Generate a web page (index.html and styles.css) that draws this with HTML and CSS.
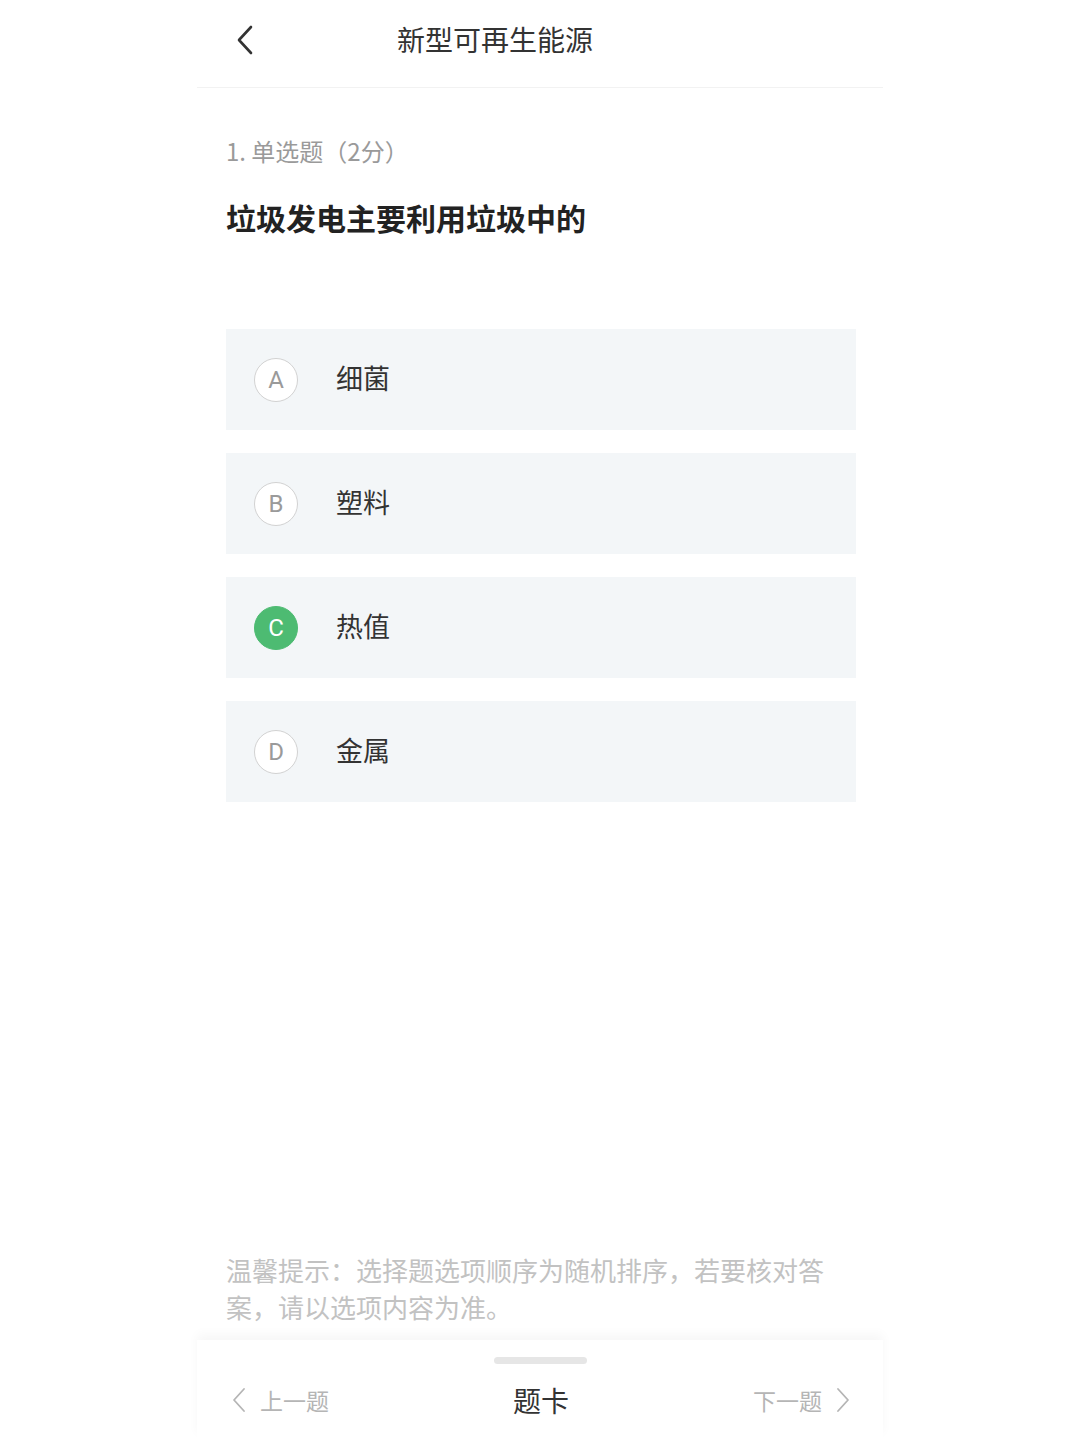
FILE: index.html
```html
<!DOCTYPE html>
<html lang="zh-CN">
<head>
<meta charset="utf-8">
<title>新型可再生能源</title>
<link rel="stylesheet" href="styles.css">
</head>
<body>
<div class="app">
  <header class="topbar">
    <span class="back">
      <svg width="18" height="30" viewBox="0 0 18 30"><path d="M15 2 L3 15 L15 28" fill="none" stroke="#333" stroke-width="2.6" stroke-linecap="round" stroke-linejoin="round"/></svg>
    </span>
    <h1 class="title">新型可再生能源</h1>
  </header>

  <main class="content">
    <div class="qlabel">1. 单选题（2分）</div>
    <div class="qtext">垃圾发电主要利用垃圾中的</div>

    <ul class="options">
      <li class="option"><span class="mark">A</span><span class="otext">细菌</span></li>
      <li class="option"><span class="mark">B</span><span class="otext">塑料</span></li>
      <li class="option"><span class="mark selected">C</span><span class="otext">热值</span></li>
      <li class="option"><span class="mark">D</span><span class="otext">金属</span></li>
    </ul>

    <div class="spacer"></div>

    <p class="hint">温馨提示：选择题选项顺序为随机排序，若要核对答案，请以选项内容为准。</p>
  </main>

  <footer class="bottombar">
    <div class="handle"></div>
    <nav class="nav">
      <span class="nav-side prev">
        <svg width="14" height="26" viewBox="0 0 14 26"><path d="M12 2 L2 13 L12 24" fill="none" stroke="#b5b5b5" stroke-width="1.8" stroke-linecap="round" stroke-linejoin="round"/></svg>
        <span>上一题</span>
      </span>
      <span class="nav-center">题卡</span>
      <span class="nav-side next">
        <span>下一题</span>
        <svg width="14" height="26" viewBox="0 0 14 26"><path d="M2 2 L12 13 L2 24" fill="none" stroke="#b5b5b5" stroke-width="1.8" stroke-linecap="round" stroke-linejoin="round"/></svg>
      </span>
    </nav>
  </footer>
</div>
</body>
</html>
```

FILE: styles.css
```css
* { box-sizing: border-box; }
html, body {
  margin: 0;
  padding: 0;
  background: #ffffff;
}
body {
  font-family: "Noto Sans CJK SC", "Noto Sans", Roboto, sans-serif;
  color: #333;
}
.app {
  width: 686px;
  height: 1439px;
  margin: 0 auto;
  display: flex;
  flex-direction: column;
  background: #fff;
}
.topbar {
  height: 88px;
  flex: none;
  display: flex;
  align-items: center;
  padding-left: 39px;
  border-bottom: 1px solid #f2f2f2;
}
.back {
  display: flex;
  width: 18px;
  height: 30px;
  margin-top: -8px;
}
.title {
  margin: -10px 0 0 143px;
  font-size: 28px;
  font-weight: 400;
  color: #333;
  line-height: 40px;
}
.content {
  flex: 1;
  display: flex;
  flex-direction: column;
  padding: 0 27px 0 29px;
}
.qlabel {
  margin-top: 46px;
  font-size: 24px;
  line-height: 34px;
  color: #9a9a9a;
}
.qtext {
  margin-top: 29px;
  font-size: 30px;
  line-height: 40px;
  font-weight: 700;
  color: #222;
}
.options {
  list-style: none;
  margin: 92px 0 0 0;
  padding: 0;
  display: flex;
  flex-direction: column;
  gap: 23px;
}
.option {
  height: 101px;
  background: #f3f6f8;
  display: flex;
  align-items: center;
  padding-left: 28px;
}
.mark {
  width: 44px;
  height: 44px;
  border-radius: 50%;
  border: 1.5px solid #d2d2d2;
  background: #fff;
  display: flex;
  align-items: center;
  justify-content: center;
  font-family: Roboto, "Noto Sans", sans-serif;
  font-size: 24px;
  color: #9a9a9a;
  flex: none;
}
.mark.selected {
  background: #4dbb72;
  border-color: #4dbb72;
  color: #fff;
}
.otext {
  margin-left: 38px;
  font-size: 27px;
  line-height: 36px;
  margin-top: -3px;
  color: #333;
}
.spacer { flex: 1; }
.hint {
  margin: 0 0 15px 0;
  width: 610px;
  font-size: 26px;
  line-height: 37px;
  color: #c2c2c2;
}
.bottombar {
  flex: none;
  height: 99px;
  box-shadow: 0 -6px 10px rgba(0,0,0,0.035);
  display: flex;
  flex-direction: column;
  align-items: center;
  background: #fff;
}
.handle {
  margin-top: 17px;
  width: 93px;
  height: 7px;
  border-radius: 4px;
  background: #e6e6e6;
}
.nav {
  width: 100%;
  margin-top: 12px;
  height: 48px;
  display: flex;
  align-items: center;
  justify-content: space-between;
  padding: 0 33px 0 35px;
}
.nav-side {
  display: flex;
  align-items: center;
  gap: 14px;
  font-size: 23px;
  color: #b5b5b5;
  width: 120px;
}
.nav-side.next { justify-content: flex-end; }
.nav-center {
  font-size: 28px;
  color: #333;
}
```
